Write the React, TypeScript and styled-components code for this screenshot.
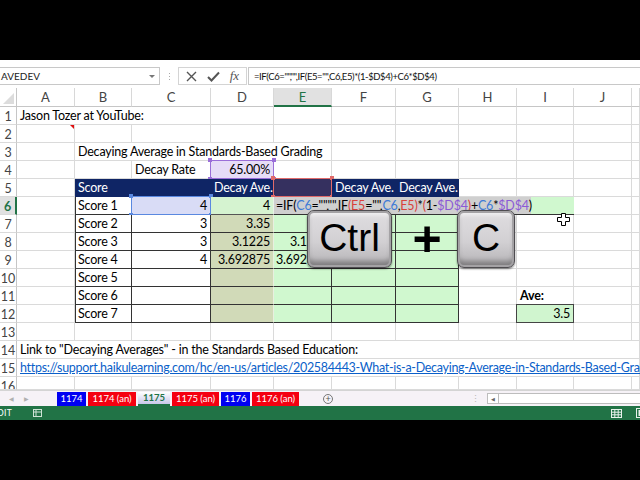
import React from "react";
import styled, { createGlobalStyle, css } from "styled-components";

const GlobalStyle = createGlobalStyle`
  html, body {
    margin: 0;
    padding: 0;
    background: #000;
  }
`;

const COLS = [17, 58, 57, 79, 63, 58, 64, 63, 58, 57, 58, 8];
const LETTERS = ["A", "B", "C", "D", "E", "F", "G", "H", "I", "J", ""];
const CELL_FONT = `Lato, "Noto Sans", sans-serif`;

type Kind =
  | "plain"
  | "head"
  | "headSel"
  | "table"
  | "rate"
  | "sel"
  | "dTop"
  | "dOlive"
  | "green"
  | "edit"
  | "ave";

type Spec = {
  t?: React.ReactNode;
  k?: Kind;
  r?: boolean;
  span?: number;
  b?: boolean;
  edge?: boolean;
  link?: boolean;
  note?: boolean;
};

const kindCss: Record<Kind, ReturnType<typeof css>> = {
  plain: css`
    border-right: 1px solid #dadada;
    border-bottom: 1px solid #dadada;
  `,
  head: css`
    background: #0f2565;
    color: #fff;
    border-right: 1px solid #0f2565;
    border-bottom: 1px solid #0f2565;
  `,
  headSel: css`
    background: #35305f;
    border: 1px solid #e06a6a;
    margin: -1px 0 0 -1px;
  `,
  table: css`
    background: #fff;
    border-right: 1px solid #333;
    border-bottom: 1px solid #333;
  `,
  rate: css`
    background: #e6dcf7;
    border: 1px solid #9a6ed8;
    margin: -1px 0 0 -1px;
  `,
  sel: css`
    background: #d9dcf6;
    border: 1px solid #5a88e0;
    margin: -1px 0 0 -1px;
  `,
  dTop: css`
    background: #d5f3d0;
    border-right: 1px solid #e9f2e6;
    border-bottom: 1px solid #555;
  `,
  dOlive: css`
    background: #d1dab8;
    border-right: 1px solid #e9efe0;
    border-bottom: 1px solid #333;
  `,
  green: css`
    background: #d0f8cf;
    border-right: 1px solid #333;
    border-bottom: 1px solid #333;
  `,
  edit: css`
    background: #d0f8cf;
    border-bottom: 1px solid #333;
    padding: 0 !important;
  `,
  ave: css`
    background: #d0f5cf;
    border: 1px solid #444;
    margin: -1px 0 0 -1px;
  `,
};

const Frame = styled.div`
  width: 640px;
  height: 480px;
  padding-top: 60px;
  box-sizing: border-box;
  background: #000;
  overflow: hidden;
`;

const Excel = styled.div`
  width: 640px;
  height: 360px;
  background: #fff;
  display: flex;
  flex-direction: column;
`;

const FormulaBar = styled.div`
  height: 28px;
  box-sizing: border-box;
  padding-top: 7px;
  display: flex;
  align-items: flex-start;
  font-family: ${CELL_FONT};
  background: #fff;
`;

const NameBox = styled.div`
  width: 160px;
  height: 18px;
  box-sizing: border-box;
  border: 1px solid #c8c8c8;
  border-left: none;
  display: flex;
  align-items: center;
  justify-content: space-between;
  padding: 0 4px 0 1px;
  font-size: 10px;
  color: #222;
`;

const DropArrow = styled.span`
  width: 0;
  height: 0;
  border-left: 3px solid transparent;
  border-right: 3px solid transparent;
  border-top: 3px solid #777;
`;

const Grip = styled.div`
  width: 18px;
  height: 18px;
  display: flex;
  flex-direction: column;
  align-items: center;
  justify-content: center;
  gap: 2px;
  & > i {
    width: 1px;
    height: 1px;
    background: #aaa;
  }
`;

const ButtonBox = styled.div`
  width: 69px;
  height: 18px;
  box-sizing: border-box;
  border: 1px solid #d4d4d4;
  display: flex;
  align-items: center;
  justify-content: space-around;
  padding: 0 2px;
`;

const Fx = styled.span`
  font-family: "Liberation Serif", serif;
  font-style: italic;
  font-size: 13px;
  color: #555;
`;

const FormulaInput = styled.div`
  flex: 1;
  height: 18px;
  box-sizing: border-box;
  border: 1px solid #c8c8c8;
  border-right: none;
  margin-left: 1px;
  padding-left: 5px;
  display: flex;
  align-items: center;
  font-size: 9.5px;
  letter-spacing: -0.4px;
  color: #111;
  white-space: nowrap;
`;

const Sheet = styled.div`
  position: relative;
  display: grid;
  grid-template-columns: ${COLS.map((w) => `${w}px`).join(" ")};
  grid-template-rows: 19px repeat(15, 18px) 13px;
  height: 302px;
  overflow: hidden;
  font-family: ${CELL_FONT};
`;

const Corner = styled.div`
  position: relative;
  border-right: 1px solid #c6c6c6;
  border-bottom: 1px solid #c6c6c6;
  &::after {
    content: "";
    position: absolute;
    right: 2px;
    bottom: 2px;
    border-left: 11px solid transparent;
    border-bottom: 11px solid #dcdcdc;
  }
`;

const ColHead = styled.div<{ $active?: boolean }>`
  box-sizing: border-box;
  display: flex;
  align-items: center;
  justify-content: center;
  font-size: 13px;
  color: ${(p) => (p.$active ? "#217346" : "#444")};
  background: ${(p) => (p.$active ? "#e1e1e1" : "#fff")};
  border-right: 1px solid #d8d8d8;
  border-bottom: ${(p) => (p.$active ? "2px solid #217346" : "1px solid #c6c6c6")};
`;

const RowHead = styled.div<{ $active?: boolean }>`
  box-sizing: border-box;
  display: flex;
  align-items: flex-start;
  justify-content: center;
  overflow: hidden;
  padding-top: 2px;
  font-size: 12.5px;
  line-height: 15px;
  color: ${(p) => (p.$active ? "#217346" : "#444")};
  font-weight: ${(p) => (p.$active ? 700 : 400)};
  background: ${(p) => (p.$active ? "#e1e1e1" : "#fff")};
  border-right: ${(p) => (p.$active ? "2px solid #217346" : "1px solid #c6c6c6")};
  border-bottom: 1px solid #dadada;
`;

const Cell = styled.div<{ $kind: Kind; $right?: boolean; $span?: number; $bold?: boolean; $edge?: boolean }>`
  grid-column: span ${(p) => p.$span ?? 1};
  position: relative;
  box-sizing: border-box;
  display: flex;
  align-items: flex-end;
  justify-content: ${(p) => (p.$right ? "flex-end" : "flex-start")};
  padding: 0 3px 0 3px;
  font-size: 12.5px;
  letter-spacing: -0.2px;
  line-height: 16px;
  color: #000;
  white-space: nowrap;
  font-weight: ${(p) => (p.$bold ? 700 : 400)};
  ${(p) => kindCss[p.$kind]}
  ${(p) =>
    p.$edge &&
    css`
      box-shadow: inset 1px 0 0 #333;
    `}
`;

const Link = styled.span`
  color: #0b5fc9;
  text-decoration: underline;
  letter-spacing: -0.3px;
`;

const Note = styled.span`
  position: absolute;
  top: 0;
  right: 0;
  border-left: 4px solid transparent;
  border-top: 4px solid #e01010;
`;

const Handle = styled.span<{ $c: string; $x: "l" | "r"; $y: "t" | "b" }>`
  position: absolute;
  width: 4px;
  height: 4px;
  background: ${(p) => p.$c};
  ${(p) => (p.$x === "l" ? "left: -3px;" : "right: -3px;")}
  ${(p) => (p.$y === "t" ? "top: -3px;" : "bottom: -3px;")}
`;

const Handles: React.FC<{ color: string }> = ({ color }) => (
  <>
    <Handle $c={color} $x="l" $y="t" />
    <Handle $c={color} $x="r" $y="t" />
    <Handle $c={color} $x="l" $y="b" />
    <Handle $c={color} $x="r" $y="b" />
  </>
);

const EditBox = styled.div`
  width: 257px;
  height: 100%;
  box-sizing: border-box;
  background: #cfcfcf;
  padding: 0 0 0 2px;
  display: flex;
  align-items: flex-end;
`;

const Ref = styled.span<{ $c: string }>`
  color: ${(p) => p.$c};
`;

const KeyCap = styled.div<{ $left: number; $w: number }>`
  position: absolute;
  top: 122px;
  left: ${(p) => p.$left}px;
  width: ${(p) => p.$w}px;
  height: 58px;
  box-sizing: border-box;
  border-radius: 7px;
  border: 1px solid #4e4c50;
  background: linear-gradient(180deg, #e0dee1 0%, #d2d0d3 55%, #b3b1b4 100%);
  box-shadow: inset 0 0 0 2px #a4a2a5, inset 0 -6px 5px rgba(0, 0, 0, 0.3),
    inset 0 4px 4px rgba(255, 255, 255, 0.6), 0 1px 2px rgba(0, 0, 0, 0.5);
  display: flex;
  align-items: center;
  justify-content: center;
  font-family: "Liberation Sans", Arial, sans-serif;
  font-size: 39px;
  color: #000;
  padding-bottom: 2px;
`;

const Plus = styled.div`
  position: absolute;
  top: 126px;
  left: 405px;
  width: 44px;
  height: 50px;
  display: flex;
  align-items: center;
  justify-content: center;
  font-family: "Liberation Sans", Arial, sans-serif;
  font-weight: 700;
  font-size: 50px;
  color: #000;
`;

const Cursor = styled.svg`
  position: absolute;
  left: 557px;
  top: 125px;
`;

const TabBar = styled.div`
  height: 16px;
  box-sizing: border-box;
  border-top: 1px solid #d4d4d4;
  background: #f6f2f7;
  display: flex;
  align-items: center;
  font-family: ${CELL_FONT};
`;

const NavArrows = styled.div`
  width: 57px;
  display: flex;
  gap: 10px;
  padding-left: 9px;
  box-sizing: border-box;
  color: #b0b0b0;
  font-size: 6px;
`;

const Tab = styled.div<{ $tone: "blue" | "red" | "active"; $w: number }>`
  width: ${(p) => p.$w}px;
  height: 14px;
  margin-right: 2px;
  box-sizing: border-box;
  display: flex;
  align-items: center;
  justify-content: center;
  font-size: 9.5px;
  ${(p) =>
    p.$tone === "blue"
      ? css`
          background: #0000f2;
          color: #fff;
        `
      : p.$tone === "red"
      ? css`
          background: #f50010;
          color: #fff;
        `
      : css`
          background: linear-gradient(180deg, #ffffff 0%, #c9c7ea 100%);
          color: #217346;
          font-weight: 700;
          border-bottom: 2px solid #217346;
        `}
`;

const AddSheet = styled.div`
  width: 10px;
  height: 10px;
  margin-left: 22px;
  border: 1px solid #777;
  border-radius: 50%;
  box-sizing: border-box;
  display: flex;
  align-items: center;
  justify-content: center;
  font-size: 9px;
  line-height: 1;
  color: #555;
`;

const VDots = styled.div`
  margin-left: 138px;
  color: #b8b8b8;
  font-size: 9px;
`;

const HScroll = styled.div`
  margin-left: 7px;
  flex: 1;
  height: 11px;
  box-sizing: border-box;
  border: 1px solid #bdbdbd;
  border-right: none;
  background: #fff;
  display: flex;
`;

const ScrollBtn = styled.div`
  width: 10px;
  border-right: 1px solid #bdbdbd;
  display: flex;
  align-items: center;
  justify-content: center;
  font-size: 5px;
  color: #666;
`;

const StatusBar = styled.div`
  flex: 1;
  background: #217346;
  display: flex;
  align-items: center;
  font-family: ${CELL_FONT};
  font-size: 8.5px;
  color: #fff;
`;

const StatusText = styled.span`
  margin-left: -8px;
  letter-spacing: 0.3px;
`;

const StatusRight = styled.div`
  margin-left: auto;
  display: flex;
  gap: 14px;
  align-items: center;
  margin-right: -6px;
`;

const formula = (
  <>
    =IF(<Ref $c="#3d7ad6">C6</Ref>="","",IF<Ref $c="#d9423b">(E5</Ref>="",<Ref $c="#3d7ad6">C6</Ref>,
    <Ref $c="#d9423b">E5)</Ref>*<Ref $c="#d9423b">(</Ref>1-<Ref $c="#8b5ad6">$D$4</Ref>
    <Ref $c="#d9423b">)</Ref>+<Ref $c="#3d7ad6">C6</Ref>*<Ref $c="#8b5ad6">$D$4</Ref>)
  </>
);

const P: Spec = { k: "plain" };
const plain = (n: number): Spec[] => Array.from({ length: n }, () => P);

const tableRow = (label: string, c: string, d: string, e: string, dk: Kind): Spec[] => [
  P,
  { t: label, k: "table", edge: true },
  { t: c, k: "table", r: true },
  { t: d, k: dk, r: true },
  { t: e, k: "green", r: true },
  { k: "green" },
  { k: "green" },
];

const ROWS: Spec[][] = [
  [{ t: "Jason Tozer at YouTube:", k: "plain", span: 3 }, ...plain(8)],
  [{ k: "plain", note: true }, ...plain(10)],
  [P, { t: "Decaying Average in Standards-Based Grading", k: "plain", span: 4 }, ...plain(6)],
  [P, P, { t: "Decay Rate", k: "plain" }, { t: "65.00%", k: "rate", r: true }, ...plain(7)],
  [
    P,
    { t: "Score", k: "head" },
    { k: "head" },
    { t: "Decay Ave.", k: "head" },
    { k: "headSel" },
    { t: "Decay Ave.", k: "head" },
    { t: "Decay Ave.", k: "head" },
    ...plain(4),
  ],
  [
    P,
    { t: "Score 1", k: "table", edge: true },
    { t: "4", k: "sel", r: true },
    { t: "4", k: "dTop", r: true },
    { t: formula, k: "edit", span: 5 },
    ...plain(2),
  ],
  [...tableRow("Score 2", "3", "3.35", "", "dOlive"), ...plain(4)],
  [...tableRow("Score 3", "3", "3.1225", "3.1225", "dOlive"), ...plain(4)],
  [...tableRow("Score 4", "4", "3.692875", "3.692875", "dOlive"), ...plain(4)],
  [...tableRow("Score 5", "", "", "", "dOlive"), ...plain(4)],
  [...tableRow("Score 6", "", "", "", "dOlive"), P, { t: "Ave:", k: "plain", b: true }, P, P],
  [...tableRow("Score 7", "", "", "", "dOlive"), P, { t: "3.5", k: "ave", r: true }, P, P],
  plain(11),
  [{ t: 'Link to "Decaying Averages" - in the Standards Based Education:', k: "plain", span: 11 }],
  [
    {
      t: "https://support.haikulearning.com/hc/en-us/articles/202584443-What-is-a-Decaying-Average-in-Standards-Based-Grading",
      k: "plain",
      span: 11,
      link: true,
    },
  ],
  plain(11),
];

const handleColor: Partial<Record<Kind, string>> = {
  rate: "#9a6ed8",
  sel: "#5a88e0",
  headSel: "#e06a6a",
};

const App: React.FC = () => {
  return (
    <Frame>
      <GlobalStyle />
      <Excel>
        <FormulaBar>
          <NameBox>
            <span>AVEDEV</span>
            <DropArrow />
          </NameBox>
          <Grip>
            <i />
            <i />
            <i />
          </Grip>
          <ButtonBox>
            <svg width="11" height="11" viewBox="0 0 11 11">
              <path d="M1 1L10 10M10 1L1 10" stroke="#555" strokeWidth="1.4" />
            </svg>
            <svg width="13" height="11" viewBox="0 0 13 11">
              <path d="M1 6L4.5 9.5L12 1.5" stroke="#555" strokeWidth="2" fill="none" />
            </svg>
            <Fx>fx</Fx>
          </ButtonBox>
          <FormulaInput>=IF(C6="","",IF(E5="",C6,E5)*(1-$D$4)+C6*$D$4)</FormulaInput>
        </FormulaBar>

        <Sheet>
          <Corner />
          {LETTERS.map((l, i) => (
            <ColHead key={`h${i}`} $active={l === "E"}>
              {l}
            </ColHead>
          ))}
          {ROWS.map((row, ri) => (
            <React.Fragment key={`r${ri}`}>
              <RowHead $active={ri === 5}>{ri + 1}</RowHead>
              {row.map((c, ci) => {
                const kind = c.k ?? "plain";
                return (
                  <Cell
                    key={`c${ri}-${ci}`}
                    $kind={kind}
                    $right={c.r}
                    $span={c.span}
                    $bold={c.b}
                    $edge={c.edge}
                  >
                    {kind === "edit" ? (
                      <EditBox>{c.t}</EditBox>
                    ) : c.link ? (
                      <Link>{c.t}</Link>
                    ) : (
                      c.t
                    )}
                    {c.note && <Note />}
                    {handleColor[kind] && <Handles color={handleColor[kind]!} />}
                  </Cell>
                );
              })}
            </React.Fragment>
          ))}

          <KeyCap $left={307} $w={85}>
            Ctrl
          </KeyCap>
          <Plus>+</Plus>
          <KeyCap $left={457} $w={58}>
            C
          </KeyCap>
          <Cursor width="13" height="13" viewBox="0 0 13 13">
            <path
              d="M4.5 0.5H8.5V4.5H12.5V8.5H8.5V12.5H4.5V8.5H0.5V4.5H4.5Z"
              fill="#fff"
              stroke="#000"
              strokeWidth="1"
            />
          </Cursor>
        </Sheet>

        <TabBar>
          <NavArrows>
            <span>◀</span>
            <span>▶</span>
          </NavArrows>
          <Tab $tone="blue" $w={29}>1174</Tab>
          <Tab $tone="red" $w={48}>1174 (an)</Tab>
          <Tab $tone="active" $w={32}>1175</Tab>
          <Tab $tone="red" $w={47}>1175 (an)</Tab>
          <Tab $tone="blue" $w={29}>1176</Tab>
          <Tab $tone="red" $w={47}>1176 (an)</Tab>
          <AddSheet>+</AddSheet>
          <VDots>⋮</VDots>
          <HScroll>
            <ScrollBtn>◀</ScrollBtn>
          </HScroll>
        </TabBar>

        <StatusBar>
          <StatusText>EDIT</StatusText>
          <svg width="9" height="8" viewBox="0 0 9 8" style={{ marginLeft: 21 }}>
            <rect x="0.5" y="0.5" width="8" height="7" fill="none" stroke="#cfe3d6" />
            <path d="M0.5 3H8.5M3 0.5V7.5" stroke="#cfe3d6" />
          </svg>
          <StatusRight>
            <svg width="11" height="9" viewBox="0 0 11 9">
              <rect x="0.5" y="0.5" width="10" height="8" fill="none" stroke="#e8f1eb" />
              <path d="M0.5 3.2H10.5M0.5 5.8H10.5M3.8 0.5V8.5M7.2 0.5V8.5" stroke="#e8f1eb" />
            </svg>
            <svg width="10" height="10" viewBox="0 0 10 10">
              <rect x="0.5" y="0.5" width="9" height="9" fill="none" stroke="#e8f1eb" />
              <rect x="2.5" y="2" width="5" height="6" fill="#e8f1eb" />
            </svg>
          </StatusRight>
        </StatusBar>
      </Excel>
    </Frame>
  );
};

export default App;
